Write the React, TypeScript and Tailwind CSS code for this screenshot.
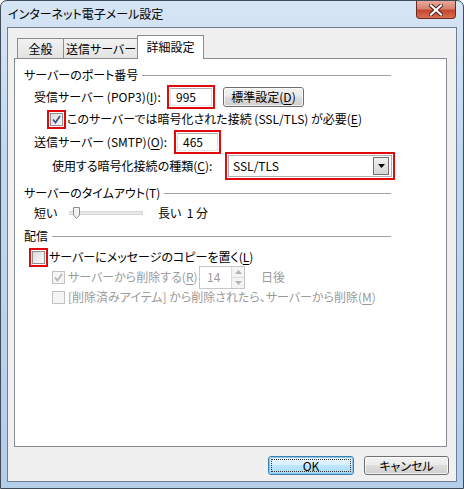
const font = "font-['Meiryo_UI','Noto_Sans_CJK_JP',sans-serif] [font-feature-settings:'palt']";

function U({ children }: { children: string }) {
  return <span className="underline underline-offset-[2px]">{children}</span>;
}

function GroupHeader({ label }: { label: string }) {
  return (
    <div className="ml-[9px] flex h-[16px] w-[367px] items-center">
      <span className="whitespace-nowrap">{label}</span>
      <div className="ml-[4px] h-px flex-1 bg-[#a0a0a0]" />
    </div>
  );
}

function Check({ checked, disabled }: { checked?: boolean; disabled?: boolean }) {
  return (
    <div
      className={
        disabled
          ? "flex h-[13px] w-[13px] items-center justify-center border border-[#c2c2c2] bg-[#f4f4f4]"
          : "flex h-[13px] w-[13px] items-center justify-center border border-[#8e8f8f] bg-gradient-to-br from-[#dcdcdc] to-[#fbfbfb]"
      }
    >
      {checked && (
        <svg width="9" height="9" viewBox="0 0 9 9">
          <path
            d="M1 4.5 L3.5 7.5 L8 1"
            fill="none"
            stroke={disabled ? "#b5b5b5" : "#3d5190"}
            strokeWidth="1.7"
          />
        </svg>
      )}
    </div>
  );
}

function RedBox({ className, children }: { className: string; children: React.ReactNode }) {
  return <div className={`flex shrink-0 border-2 border-[#e00a0a] p-[1px] ${className}`}>{children}</div>;
}

function TextBox({ value }: { value: string }) {
  return (
    <div className="flex flex-1 items-center border border-[#abadb3] border-l-[#e2e3ea] border-r-[#dbdfe6] border-b-[#e3e9ef] bg-white pl-[5px]">
      {value}
    </div>
  );
}

function Win7Button({ label, className, focused }: { label: React.ReactNode; className: string; focused?: boolean }) {
  return (
    <div
      className={`flex items-center justify-center rounded-[3px] border ${
        focused
          ? "border-[#3c7fb1] bg-[linear-gradient(#eaf6fd_0%,#d9f0fc_45%,#bee6fd_50%,#a7d9f5_100%)]"
          : "border-[#707070] bg-[linear-gradient(#f2f2f2_0%,#ebebeb_45%,#dddddd_50%,#cfcfcf_100%)]"
      } ${className}`}
    >
      <div
        className={`flex h-full w-full items-center justify-center rounded-[2px] border ${
          focused ? "border-[#8fc5e8] p-[1px]" : "border-white/70"
        }`}
      >
        {focused ? (
          <span className="flex h-full w-full items-center justify-center border border-dotted border-[#333]">
            {label}
          </span>
        ) : (
          <span>{label}</span>
        )}
      </div>
    </div>
  );
}

function Slider() {
  return (
    <svg width="75" height="14" viewBox="0 0 75 14">
      <rect x="0.5" y="5.5" width="73" height="3" fill="#e7eaea" stroke="#d6d6d6" />
      <path d="M4.5 1.5 H10.5 V9 L7.5 12.5 L4.5 9 Z" fill="#f2f2f2" stroke="#8b8b8b" />
    </svg>
  );
}

function Spin() {
  return (
    <div className="flex h-[23px] w-[46px] border border-[#c6c6c6] bg-white">
      <div className="flex flex-1 items-center pl-[7px] text-[#9a9a9a]">14</div>
      <div className="flex w-[13px] flex-col border-l border-[#dcdcdc] bg-[#f4f4f4]">
        <div className="flex flex-1 items-center justify-center border-b border-[#dcdcdc]">
          <svg width="7" height="4" viewBox="0 0 7 4">
            <path d="M0 4 L3.5 0 L7 4 Z" fill="#b4b4b4" />
          </svg>
        </div>
        <div className="flex flex-1 items-center justify-center">
          <svg width="7" height="4" viewBox="0 0 7 4">
            <path d="M0 0 L3.5 4 L7 0 Z" fill="#b4b4b4" />
          </svg>
        </div>
      </div>
    </div>
  );
}

export default function App() {
  return (
    <div className={`${font} text-[12px] text-black`}>
      <div className="flex h-[489px] w-[464px] flex-col rounded-t-[7px] border border-[#3f4b59] bg-[linear-gradient(180deg,#d6e5f4_0%,#c2d8ef_30%,#b4cde9_100%)]">
        {/* タイトルバー */}
        <div className="flex h-[26px] items-start justify-between pl-[7px]">
          <span className="mt-[5px] text-[12px] leading-[16px]">インターネット電子メール設定</span>
          <div className="mr-[7px] flex h-[18px] w-[40px] items-center justify-center rounded-b-[4px] border border-t-0 border-[#6b2a22] bg-[linear-gradient(#e9a99b_0%,#d7816f_45%,#c7452f_55%,#d7704f_100%)]">
            <svg width="14" height="12" viewBox="0 0 14 12">
              <path d="M2 1.5 L12 10.5 M12 1.5 L2 10.5" stroke="#4a1a12" strokeWidth="4" strokeLinecap="square" />
              <path d="M2 1.5 L12 10.5 M12 1.5 L2 10.5" stroke="#ffffff" strokeWidth="2.2" strokeLinecap="square" />
            </svg>
          </div>
        </div>

        {/* クライアント領域 */}
        <div className="mx-[6px] mb-[6px] flex flex-1 flex-col border border-[#6c7f94] bg-[#f0f0f0]">
          {/* タブ */}
          <div className="ml-[9px] mt-[7px] flex h-[23px] items-end">
            <div className="flex h-[20px] w-[47px] items-center justify-center border border-b-0 border-[#898c95] bg-[linear-gradient(#f2f2f2,#e3e3e3)]">
              全般
            </div>
            <div className="-ml-px flex h-[20px] w-[76px] items-center justify-center border border-b-0 border-[#898c95] bg-[linear-gradient(#f2f2f2,#e3e3e3)]">
              送信サーバー
            </div>
            <div className="relative z-10 -mb-px -ml-[2px] flex h-[24px] w-[67px] items-center justify-center border border-b-0 border-[#898c95] bg-white pb-[2px]">
              詳細設定
            </div>
          </div>

          {/* パネル */}
          <div className="ml-[6px] flex h-[389px] w-[433px] flex-col border border-[#898c95] bg-white">
            <div className="mt-[8px]">
              <GroupHeader label="サーバーのポート番号" />
            </div>

            <div className="ml-[19px] mt-[2px] flex h-[24px] items-center">
              <div className="w-[133px] whitespace-nowrap">
                受信サーバー (POP3)(<U>I</U>):
              </div>
              <RedBox className="h-[24px] w-[48px]">
                <TextBox value="995" />
              </RedBox>
              <Win7Button label={<>標準設定(<U>D</U>)</>} className="ml-[8px] h-[20px] w-[81px]" />
            </div>

            <div className="ml-[32px] flex h-[20px] items-center">
              <RedBox className="h-[19px] w-[19px]">
                <Check checked />
              </RedBox>
              <span className="ml-[1px] whitespace-nowrap">
                このサーバーでは暗号化された接続 (SSL/TLS) が必要(<U>E</U>)
              </span>
            </div>

            <div className="ml-[19px] mt-[1px] flex h-[24px] items-center">
              <div className="w-[140px] whitespace-nowrap">
                送信サーバー (SMTP)(<U>O</U>):
              </div>
              <RedBox className="h-[24px] w-[47px]">
                <TextBox value="465" />
              </RedBox>
            </div>

            <div className="ml-[37px] flex h-[24px] items-center">
              <div className="w-[173px] whitespace-nowrap">
                使用する暗号化接続の種類(<U>C</U>):
              </div>
              <RedBox className="h-[28px] w-[170px]">
                <div className="flex flex-1 items-center border border-[#abadb3] bg-white pl-[4px]">
                  <span className="flex-1">SSL/TLS</span>
                  <div className="mr-[2px] flex h-[18px] w-[16px] items-center justify-center border border-[#707070] bg-[linear-gradient(#f2f2f2,#d4d4d4)]">
                    <svg width="7" height="4" viewBox="0 0 7 4">
                      <path d="M0 0 L7 0 L3.5 4 Z" fill="#000" />
                    </svg>
                  </div>
                </div>
              </RedBox>
            </div>

            <div className="mt-[7px]">
              <GroupHeader label="サーバーのタイムアウト(T)" />
            </div>

            <div className="ml-[19px] mt-[4px] flex h-[16px] items-center">
              <span className="w-[35px]">短い</span>
              <Slider />
              <span className="ml-[14px]">長い&nbsp;&nbsp;1 分</span>
            </div>

            <div className="mt-[7px]">
              <GroupHeader label="配信" />
            </div>

            <div className="ml-[14px] mt-[3px] flex h-[20px] items-center">
              <RedBox className="h-[19px] w-[19px]">
                <Check />
              </RedBox>
              <span className="ml-[1px] whitespace-nowrap">
                サーバーにメッセージのコピーを置く(<U>L</U>)
              </span>
            </div>

            <div className="ml-[37px] flex h-[20px] items-center text-[#9a9a9a]">
              <Check checked disabled />
              <span className="ml-[3px] w-[131px] whitespace-nowrap">
                サーバーから削除する(<U>R</U>)
              </span>
              <Spin />
              <span className="ml-[16px]">日後</span>
            </div>

            <div className="ml-[37px] flex h-[20px] items-center text-[#9a9a9a]">
              <Check disabled />
              <span className="ml-[3px] whitespace-nowrap">
                [削除済みアイテム] から削除されたら、サーバーから削除(<U>M</U>)
              </span>
            </div>
          </div>

          {/* ボタン */}
          <div className="mr-[7px] mt-[9px] flex justify-end gap-[10px]">
            <Win7Button label="OK" focused className="h-[19px] w-[86px]" />
            <Win7Button label="キャンセル" className="h-[19px] w-[85px]" />
          </div>
        </div>
      </div>
    </div>
  );
}
